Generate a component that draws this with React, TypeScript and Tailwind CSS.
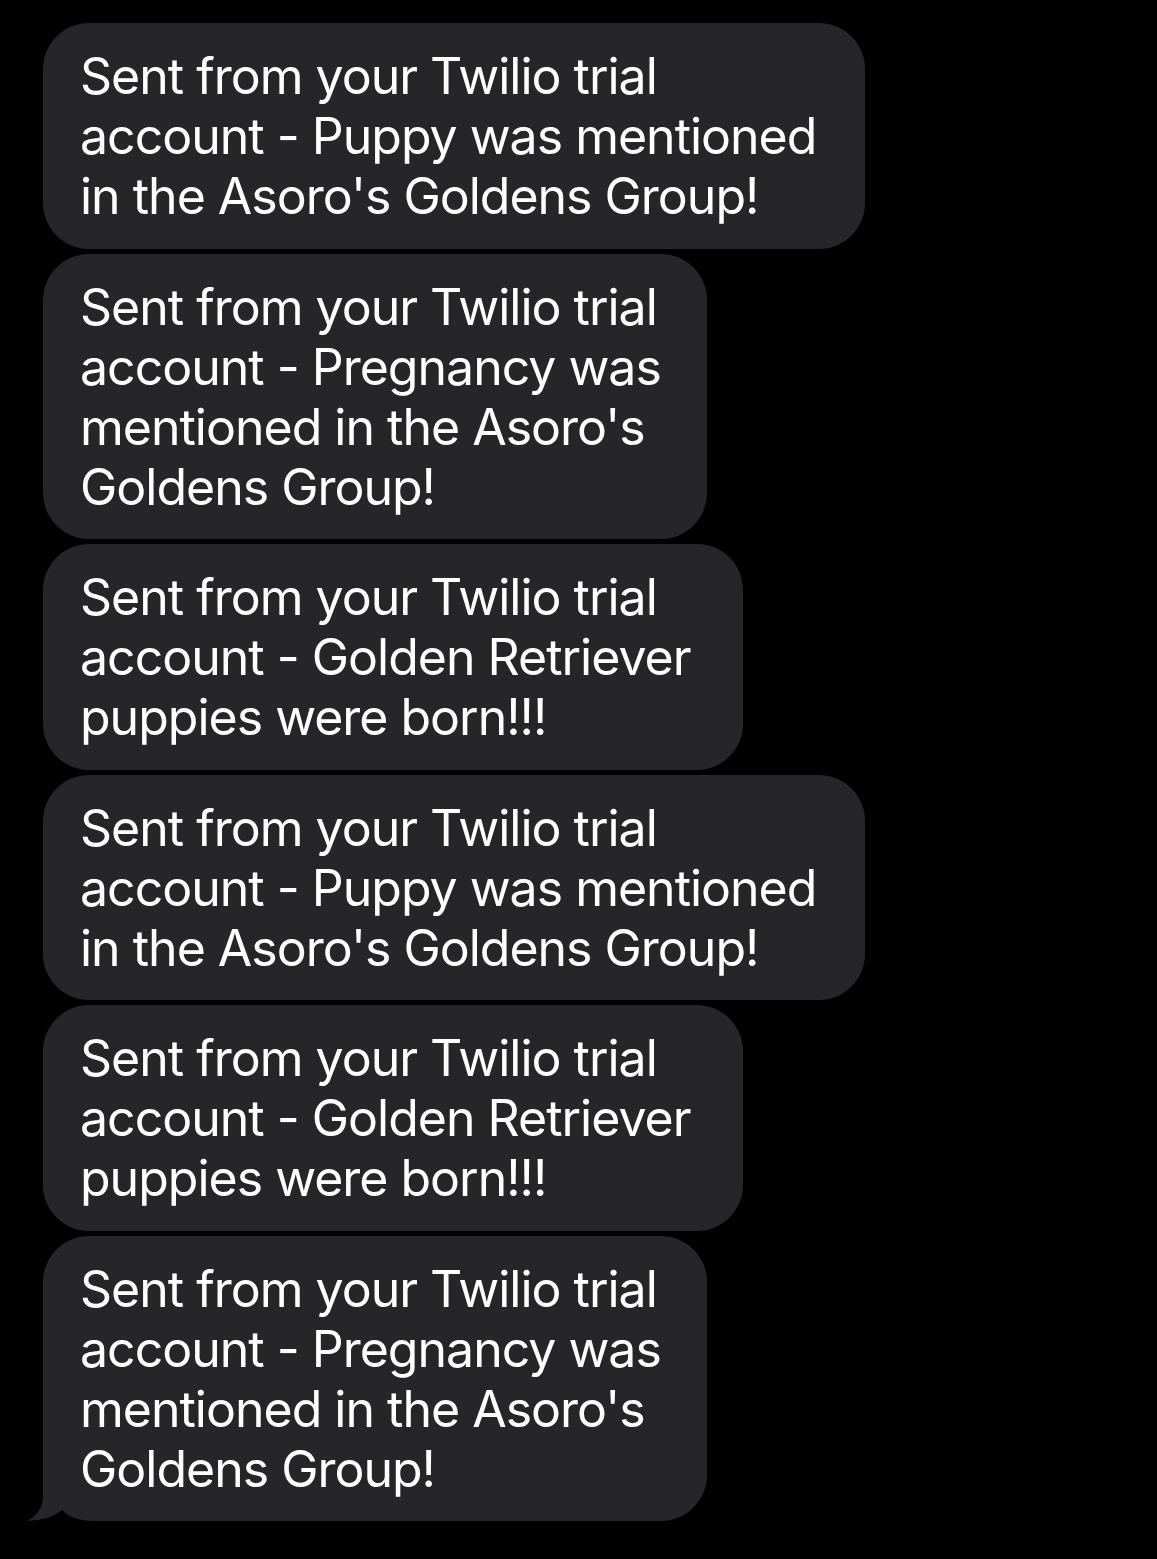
import React from 'react';

const messages: { width: string; lines: string[] }[] = [
  {
    width: 'w-[822px]',
    lines: ['Sent from your Twilio trial', 'account - Puppy was mentioned', "in the Asoro's Goldens Group!"],
  },
  {
    width: 'w-[664px]',
    lines: ['Sent from your Twilio trial', 'account - Pregnancy was', "mentioned in the Asoro's", 'Goldens Group!'],
  },
  {
    width: 'w-[700px]',
    lines: ['Sent from your Twilio trial', 'account - Golden Retriever', 'puppies were born!!!'],
  },
  {
    width: 'w-[822px]',
    lines: ['Sent from your Twilio trial', 'account - Puppy was mentioned', "in the Asoro's Goldens Group!"],
  },
  {
    width: 'w-[700px]',
    lines: ['Sent from your Twilio trial', 'account - Golden Retriever', 'puppies were born!!!'],
  },
  {
    width: 'w-[664px]',
    lines: ['Sent from your Twilio trial', 'account - Pregnancy was', "mentioned in the Asoro's", 'Goldens Group!'],
  },
];

function Bubble({ width, lines, tail }: { width: string; lines: string[]; tail?: boolean }) {
  return (
    <div
      className={`relative ${width} rounded-[46px] ${tail ? 'rounded-bl-none' : ''} bg-[#262628] pl-[37px] pt-[23px] pb-[22.5px]`}
    >
      {/* tail of the last bubble */}
      {tail && (
        <svg className="absolute left-[-16px] bottom-0" width="70" height="30" viewBox="0 0 70 30">
          <path d="M16 0 L16 6 C16 18 8 26 0 30 C14 30 26 26 35 19 L35 0 Z" fill="#262628" />
          <path d="M0 30 C14 30 26 26 35 19 C42 26 52 30 68 30 Z" fill="#000" />
        </svg>
      )}
      <div className="relative text-[50px] leading-[60px] text-white whitespace-nowrap tracking-[-1px]">
        {lines.map((l, i) => (
          <div key={i}>{l}</div>
        ))}
      </div>
    </div>
  );
}

export default function App() {
  return (
    <main
      className="min-h-[1559px] w-[1157px] bg-black pl-[43px] pt-[23px]"
      style={{ fontFamily: 'Inter, "Noto Sans", sans-serif' }}
    >
      <div className="flex flex-col gap-[5px]">
        {messages.map((m, i) => (
          <Bubble key={i} width={m.width} lines={m.lines} tail={i === messages.length - 1} />
        ))}
      </div>
    </main>
  );
}
